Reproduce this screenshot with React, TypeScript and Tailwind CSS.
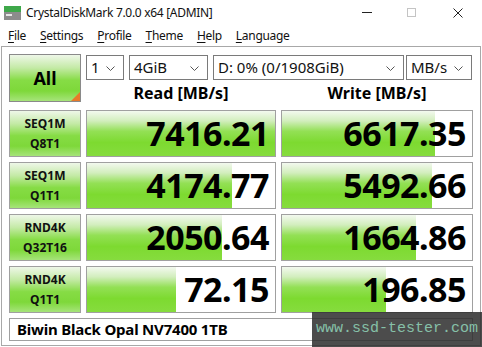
import React from 'react';

interface ResultRow {
    line1: string;
    line2: string;
    read: string;
    readFill: number;
    write: string;
    writeFill: number;
}

const rows: ResultRow[] = [
    { line1: 'SEQ1M', line2: 'Q8T1', read: '7416.21', readFill: 188, write: '6617.35', writeFill: 153 },
    { line1: 'SEQ1M', line2: 'Q1T1', read: '4174.77', readFill: 145, write: '5492.66', writeFill: 150 },
    { line1: 'RND4K', line2: 'Q32T16', read: '2050.64', readFill: 135, write: '1664.86', writeFill: 134 },
    { line1: 'RND4K', line2: 'Q1T1', read: '72.15', readFill: 89, write: '196.85', writeFill: 104 },
];

const menu = ['File', 'Settings', 'Profile', 'Theme', 'Help', 'Language'];

const greenBtn =
    'bg-[linear-gradient(to_bottom,#eef7e8_0%,#c4eaa6_28%,#86dc45_55%,#7ed83a_78%,#a6e47a_100%)]';
const greenBar =
    'bg-[linear-gradient(to_bottom,#f3f9ef_0%,#d2eebd_22%,#93e055_45%,#7dda30_70%,#86dc3e_100%)]';

const Chevron = () => (
    <svg width="9" height="6" viewBox="0 0 9 6" className="absolute right-[8px] top-[10px]">
        <path d="M0.5 0.5 L4.5 4.5 L8.5 0.5" fill="none" stroke="#555" strokeWidth="1" />
    </svg>
);

const Combo: React.FC<{ label: string; className: string }> = ({ label, className }) => (
    <div className={`relative h-[25px] border border-[#7a7a7a] bg-white pl-[4px] text-[15px] leading-[23px] text-[#111] ${className}`}>
        {label}
        <Chevron />
    </div>
);

const ValueBox: React.FC<{ value: string; fill: number; className: string }> = ({ value, fill, className }) => (
    <div className={`relative h-[47px] border border-[#a0a0a0] bg-white overflow-hidden ${className}`}>
        <div className={`absolute left-0 top-0 bottom-0 ${greenBar}`} style={{ width: fill }} />
        <div className="relative h-full flex items-center justify-end pr-[6px] text-[34px] font-bold text-black tracking-[-0.5px]">
            {value}
        </div>
    </div>
);

export default function App() {
    return (
        <div className="relative w-[482px] h-[347px] bg-white overflow-hidden font-['Noto_Sans',sans-serif] text-black">
            {/* Title bar */}
            <div className="h-[25px] flex items-center">
                <svg width="17" height="14" viewBox="0 0 17 14" className="ml-[4px] mr-[5px]">
                    <rect x="0" y="0" width="17" height="6" fill="#3ea84a" />
                    <rect x="0" y="6" width="17" height="8" fill="#8c8c8c" />
                    <rect x="2" y="8" width="6" height="2" fill="#e6e6e6" />
                </svg>
                <span className="text-[12px] tracking-[-0.3px] text-[#111]">CrystalDiskMark 7.0.0 x64 [ADMIN]</span>
                <div className="ml-auto flex items-center h-full">
                    <div className="w-[10px] h-[1px] bg-[#222] mr-[35px]" />
                    <div className="w-[9px] h-[9px] border border-[#c4c4c4] mr-[37px]" />
                    <svg width="10" height="10" viewBox="0 0 10 10" className="mr-[19px]">
                        <path d="M0.5 0.5 L9.5 9.5 M9.5 0.5 L0.5 9.5" stroke="#222" strokeWidth="1" />
                    </svg>
                </div>
            </div>

            {/* Menu bar */}
            <div className="h-[21px] flex items-center gap-[14px] pl-[8px] pt-[1px] text-[12px] tracking-[-0.3px] text-[#111]">
                {menu.map((m) => (
                    <span key={m}>
                        <span className="underline underline-offset-2">{m[0]}</span>
                        {m.slice(1)}
                    </span>
                ))}
            </div>

            {/* Main panel */}
            <div className="mx-[1px] h-[300px] border border-[#a8a8a8] px-[7px] pt-[7px]">
                {/* Top controls */}
                <div className="flex gap-[5px]">
                    <div className={`relative w-[72px] h-[48px] border border-[#8a8a8a] ${greenBtn} flex items-center justify-center text-[18px] font-bold`}>
                        All
                        <div className="absolute right-0 bottom-0 w-0 h-0 border-l-[9px] border-l-transparent border-b-[9px] border-b-[#e8792a]" />
                    </div>
                    <div className="flex flex-col">
                        <div className="mt-[1px] flex">
                            <Combo label="1" className="w-[38px]" />
                            <Combo label="4GiB" className="w-[79px] ml-[5px]" />
                            <Combo label="D: 0% (0/1908GiB)" className="w-[191px] ml-[5px]" />
                            <Combo label="MB/s" className="w-[66px] ml-[2px]" />
                        </div>
                        <div className="flex h-[26px] items-center text-[16px] font-bold">
                            <div className="w-[190px] text-center">Read [MB/s]</div>
                            <div className="w-[192px] ml-[5px] text-center">Write [MB/s]</div>
                        </div>
                    </div>
                </div>

                {/* Results */}
                <div className="mt-[4px] flex flex-col gap-[5px]">
                    {rows.map((r) => (
                        <div key={r.line1 + r.line2} className="flex gap-[5px]">
                            <div className={`w-[72px] h-[47px] border border-[#a0a0a0] ${greenBtn} flex flex-col items-center justify-center text-[12px] font-bold leading-[20px] text-[#111]`}>
                                <span>{r.line1}</span>
                                <span>{r.line2}</span>
                            </div>
                            <ValueBox value={r.read} fill={r.readFill} className="w-[190px]" />
                            <ValueBox value={r.write} fill={r.writeFill} className="w-[192px]" />
                        </div>
                    ))}
                </div>

                {/* Drive name */}
                <div className="mt-[5px] h-[23px] border border-[#a0a0a0] bg-white flex items-center pl-[7px] text-[15px] tracking-[-0.2px] font-bold">
                    Biwin Black Opal NV7400 1TB
                </div>
            </div>

            {/* Watermark */}
            <div className="absolute left-[312px] top-[312px] w-[170px] h-[35px] bg-[rgba(45,45,45,0.85)] flex items-center pl-[4px] font-['Liberation_Mono',monospace] text-[15px] text-[#86c0a8]">
                www.ssd-tester.com
            </div>
        </div>
    );
}
